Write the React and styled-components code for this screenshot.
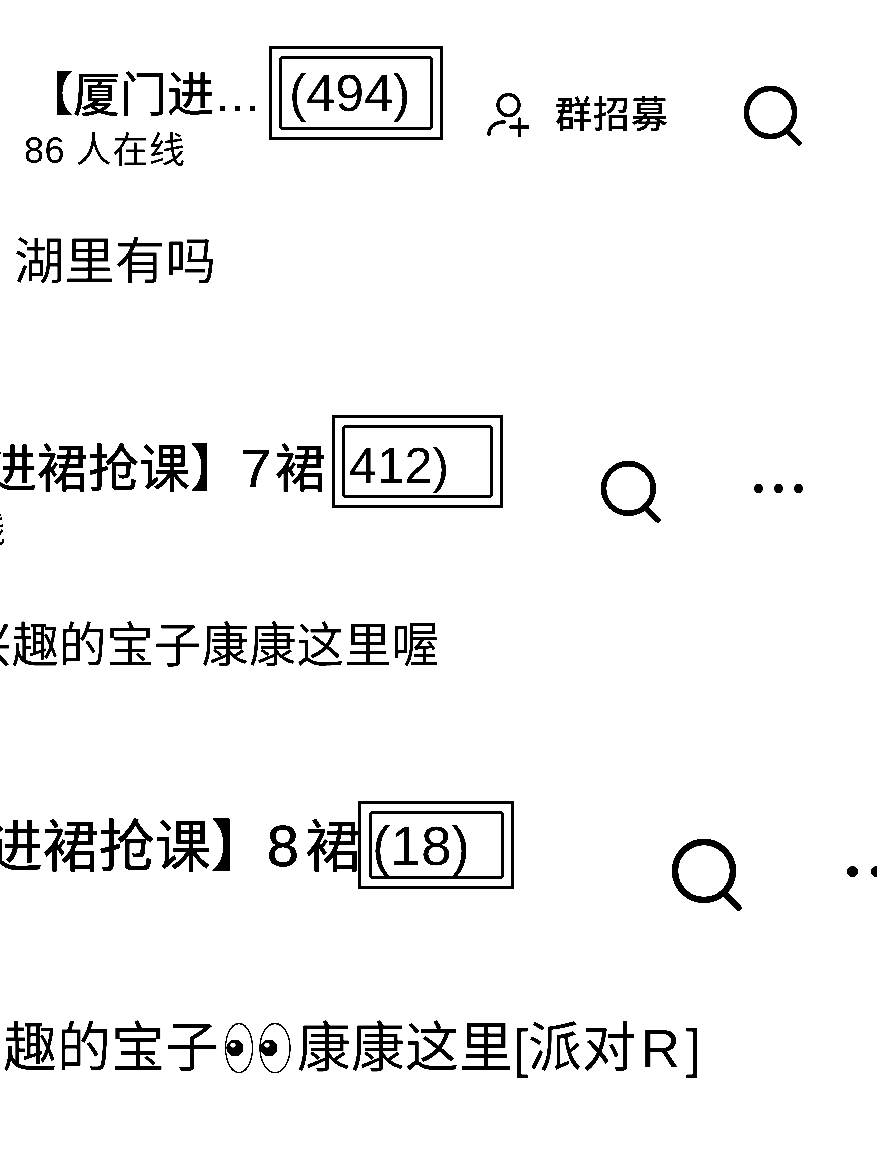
import React from 'react'
import styled, { createGlobalStyle } from 'styled-components'

const GlobalStyle = createGlobalStyle`
  html, body {
    margin: 0;
    padding: 0;
    background: #fff;
  }
`

const Page = styled.div`
  width: 877px;
  height: 1170px;
  overflow: hidden;
  background: #fff;
  color: #000;
  font-family: "Liberation Sans", "Noto Sans CJK SC", sans-serif;
  filter: grayscale(1) contrast(8);
`

const Section = styled.section`
  height: ${p => p.$height}px;
  padding-top: ${p => p.$top}px;
  box-sizing: border-box;
`

const Header = styled.div`
  display: flex;
  align-items: flex-start;
  height: 100px;
`

const TitleColumn = styled.div`
  flex: none;
  width: ${p => p.$width}px;
  padding-top: ${p => p.$top}px;
  display: flex;
  flex-direction: column;
  align-items: flex-end;
`

const Title = styled.div`
  white-space: nowrap;
  font-size: ${p => p.$size}px;
  line-height: ${p => p.$size}px;
  margin-right: ${p => p.$right || 0}px;
  -webkit-text-stroke: 0.5px #000;
`

const TitleNumber = styled.span`
  font-size: ${p => p.$size}px;
  margin-right: ${p => p.$gap}px;
`

const Online = styled.div`
  align-self: ${p => p.$align || 'flex-end'};
  margin-top: ${p => p.$top}px;
  margin-left: ${p => p.$left || 0}px;
  margin-right: ${p => p.$right || 0}px;
  white-space: nowrap;
  font-size: 36px;
  line-height: 36px;
  letter-spacing: 0.6px;
`

const BadgeOuter = styled.div`
  flex: none;
  box-sizing: border-box;
  width: ${p => p.$width}px;
  height: ${p => p.$height}px;
  border: 3px solid #000;
  padding: 7px 7px 7px ${p => p.$inset}px;
`

const BadgeInner = styled.div`
  box-sizing: border-box;
  height: 100%;
  border: 3px solid #000;
  border-radius: 4px;
  padding-left: ${p => p.$pad}px;
  padding-top: ${p => p.$drop || 0}px;
  display: flex;
  align-items: center;
  white-space: nowrap;
  font-size: ${p => p.$size}px;
  line-height: 1;
`

const Recruit = styled.div`
  display: flex;
  align-items: center;
  margin-top: 47px;
  margin-left: 44px;
  gap: 26px;
  font-size: 37px;
  line-height: 43px;
  font-weight: 500;
  letter-spacing: 1px;
`

const IconSlot = styled.div`
  flex: none;
  margin-top: ${p => p.$top}px;
  margin-left: ${p => p.$left}px;
  line-height: 0;

  svg {
    display: block;
    overflow: visible;
  }
`

const Dots = styled.div`
  flex: none;
  display: flex;
  gap: ${p => p.$gap}px;
  margin-top: ${p => p.$top}px;
  margin-left: ${p => p.$left}px;
`

const Dot = styled.span`
  flex: none;
  width: ${p => p.$size}px;
  height: ${p => p.$size}px;
  border-radius: 50%;
  background: #000;
`

const Message = styled.div`
  display: flex;
  align-items: center;
  justify-content: ${p => (p.$end ? 'flex-end' : 'flex-start')};
  width: ${p => p.$width}px;
  margin-top: ${p => p.$top}px;
  margin-left: ${p => p.$shift || 0}px;
  padding-left: ${p => p.$left || 0}px;
  white-space: nowrap;
  font-size: ${p => p.$size}px;
  line-height: ${p => p.$size}px;
`

const MessageLatin = styled.span`
  margin: 0 6px 0 5px;
`

const Eyes = styled.svg`
  flex: none;
  margin: 0 6px 0 6px;
`

function SearchIcon ({ size }) {
  return (
    <svg width={size} height={size} viewBox="0 0 58 58" fill="none" stroke="#000" strokeWidth="5.4" strokeLinecap="round">
      <circle cx="26.5" cy="26.5" r="24" />
      <line x1="43" y1="45" x2="55" y2="57" />
    </svg>
  )
}

function RecruitIcon () {
  return (
    <svg width="42" height="44" viewBox="0 0 42 44" fill="none" stroke="#000" strokeWidth="3.5" strokeLinecap="round">
      <circle cx="21.5" cy="12" r="10.5" />
      <path d="M2 41c0-7 6-12 15-12" />
      <path d="M24 34h17M32.5 26v17" />
    </svg>
  )
}

function EyesIcon () {
  return (
    <Eyes width="66" height="50" viewBox="0 0 66 50" fill="none">
      <ellipse cx="14" cy="25" rx="13.5" ry="24.5" stroke="#000" strokeWidth="1.4" />
      <ellipse cx="50" cy="25" rx="15" ry="24.5" stroke="#000" strokeWidth="1.4" />
      <circle cx="10" cy="25" r="8.5" fill="#000" />
      <circle cx="44" cy="25" r="8.5" fill="#000" />
      <circle cx="8" cy="22" r="2.6" fill="#fff" />
      <circle cx="42" cy="22" r="2.6" fill="#fff" />
    </Eyes>
  )
}

export default function App () {
  return (
    <Page>
      <GlobalStyle />

      <Section $height={400} $top={46}>
        <Header>
          <TitleColumn $width={269} $top={25}>
            <Title $size={47} $right={8}>【厦门进…</Title>
            <Online $align="flex-start" $left={24} $top={15}>86 人在线</Online>
          </TitleColumn>
          <BadgeOuter $width={174} $height={94} $inset={7}>
            <BadgeInner $pad={7} $size={52}>(494)</BadgeInner>
          </BadgeOuter>
          <Recruit>
            <RecruitIcon />
            <span>群招募</span>
          </Recruit>
          <IconSlot $top={40} $left={75}>
            <SearchIcon size={58} />
          </IconSlot>
        </Header>
        <Message $width={400} $top={91} $left={14} $size={50.5}>湖里有吗</Message>
      </Section>

      <Section $height={385} $top={15}>
        <Header>
          <TitleColumn $width={332} $top={28}>
            <Title $size={51} $right={6}>【厦门进裙抢课】<TitleNumber $size={54} $gap={4}>7</TitleNumber>裙</Title>
            <Online $right={326} $top={17}>886 人在线</Online>
          </TitleColumn>
          <BadgeOuter $width={171} $height={93} $inset={7}>
            <BadgeInner $pad={4} $drop={8} $size={50}>412)</BadgeInner>
          </BadgeOuter>
          <IconSlot $top={46} $left={98}>
            <SearchIcon size={60} />
          </IconSlot>
          <Dots $top={69} $left={93} $gap={11}>
            <Dot $size={9} />
            <Dot $size={9} />
            <Dot $size={9} />
          </Dots>
        </Header>
        <Message $width={439} $top={107} $end $size={47.5}>有兴趣的宝子康康这里喔</Message>
      </Section>

      <Section $height={385} $top={16}>
        <Header>
          <TitleColumn $width={358} $top={17}>
            <Title $size={56} $right={-3}>【厦门进裙抢课】<TitleNumber $size={58} $gap={6}>8</TitleNumber>裙</Title>
          </TitleColumn>
          <BadgeOuter $width={156} $height={88} $inset={8}>
            <BadgeInner $pad={0} $drop={2} $size={55}>(18)</BadgeInner>
          </BadgeOuter>
          <IconSlot $top={38} $left={158}>
            <SearchIcon size={70} />
          </IconSlot>
          <Dots $top={65} $left={105} $gap={13}>
            <Dot $size={11} />
            <Dot $size={11} />
            <Dot $size={11} />
          </Dots>
        </Header>
        <Message $width={760} $top={120} $shift={-51} $size={54}>
          有趣的宝子<EyesIcon />康康这里[派对<MessageLatin>R</MessageLatin>]
        </Message>
      </Section>
    </Page>
  )
}
